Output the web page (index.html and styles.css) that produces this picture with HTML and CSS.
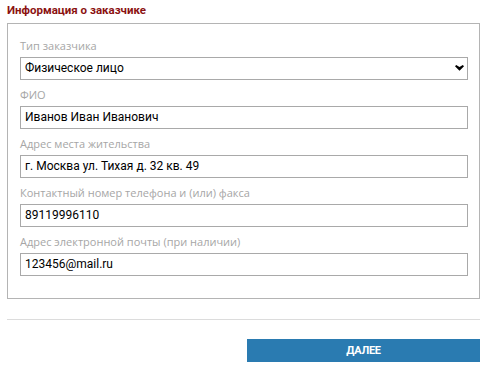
FILE: index.html
```html
<!DOCTYPE html>
<html lang="ru">
<head>
  <meta charset="UTF-8" />
  <title>Информация о заказчике</title>
  <link rel="stylesheet" href="styles.css">
</head>
<body>
  <div class="page">
    <h2 class="title">Информация о заказчике</h2>

    <div class="box">
      <div class="field">
        <label>Тип заказчика</label>
        <div class="select">
          <span>Физическое лицо</span>
          <svg class="caret" width="9" height="7" viewBox="0 0 9 7">
            <path d="M0 1.2 L1.2 0 L4.5 1.9 L7.8 0 L9 1.2 L4.5 5.8 Z" fill="#000"/>
          </svg>
        </div>
      </div>
      <div class="field">
        <label>ФИО</label>
        <div class="input">Иванов Иван Иванович</div>
      </div>
      <div class="field">
        <label>Адрес места жительства</label>
        <div class="input">г. Москва ул. Тихая д. 32 кв. 49</div>
      </div>
      <div class="field">
        <label>Контактный номер телефона и (или) факса</label>
        <div class="input">89119996110</div>
      </div>
      <div class="field">
        <label>Адрес электронной почты (при наличии)</label>
        <div class="input">123456@mail.ru</div>
      </div>
    </div>

    <hr class="sep">

    <div class="actions">
      <button class="next">ДАЛЕЕ</button>
    </div>
  </div>
</body>
</html>
```

FILE: styles.css
```css
body {
  margin: 0;
  padding: 0 8px 0 7px;
  background: #fff;
  font-family: 'Open Sans', Arial, sans-serif;
  color: #000;
}
.page {
  width: 473px;
}
.title {
  margin: 0;
  padding-top: 2px;
  height: 21px;
  font-family: Roboto, Arial, sans-serif;
  font-size: 11.5px;
  font-weight: bold;
  color: #8b1212;
  line-height: 16px;
}
.box {
  border: 1px solid #b4b4b4;
  padding: 13px 11px 22px 12px;
}
.field {
  margin-bottom: 6px;
}
.field:last-child {
  margin-bottom: 0;
}
.field label {
  display: block;
  font-size: 11px;
  line-height: 18px;
  color: #a6a6a6;
  margin-bottom: 2px;
}
.select, .input {
  height: 21px;
  border: 1px solid #a9a9a9;
  padding: 0 4px;
  font-family: Roboto, Arial, sans-serif;
  font-size: 12px;
  line-height: 21px;
  display: flex;
  align-items: center;
  justify-content: space-between;
}
.caret {
  margin-right: -1px;
}
.sep {
  margin: 20px 0 0 0;
  border: none;
  border-top: 1px solid #dcdcdc;
}
.actions {
  display: flex;
  justify-content: flex-end;
  padding-top: 19px;
}
.next {
  width: 233px;
  height: 23px;
  border: none;
  background: #2a7bb1;
  color: #fff;
  font-family: Roboto, Arial, sans-serif;
  font-size: 11px;
  font-weight: bold;
  letter-spacing: -0.3px;
  padding: 0;
}
```
